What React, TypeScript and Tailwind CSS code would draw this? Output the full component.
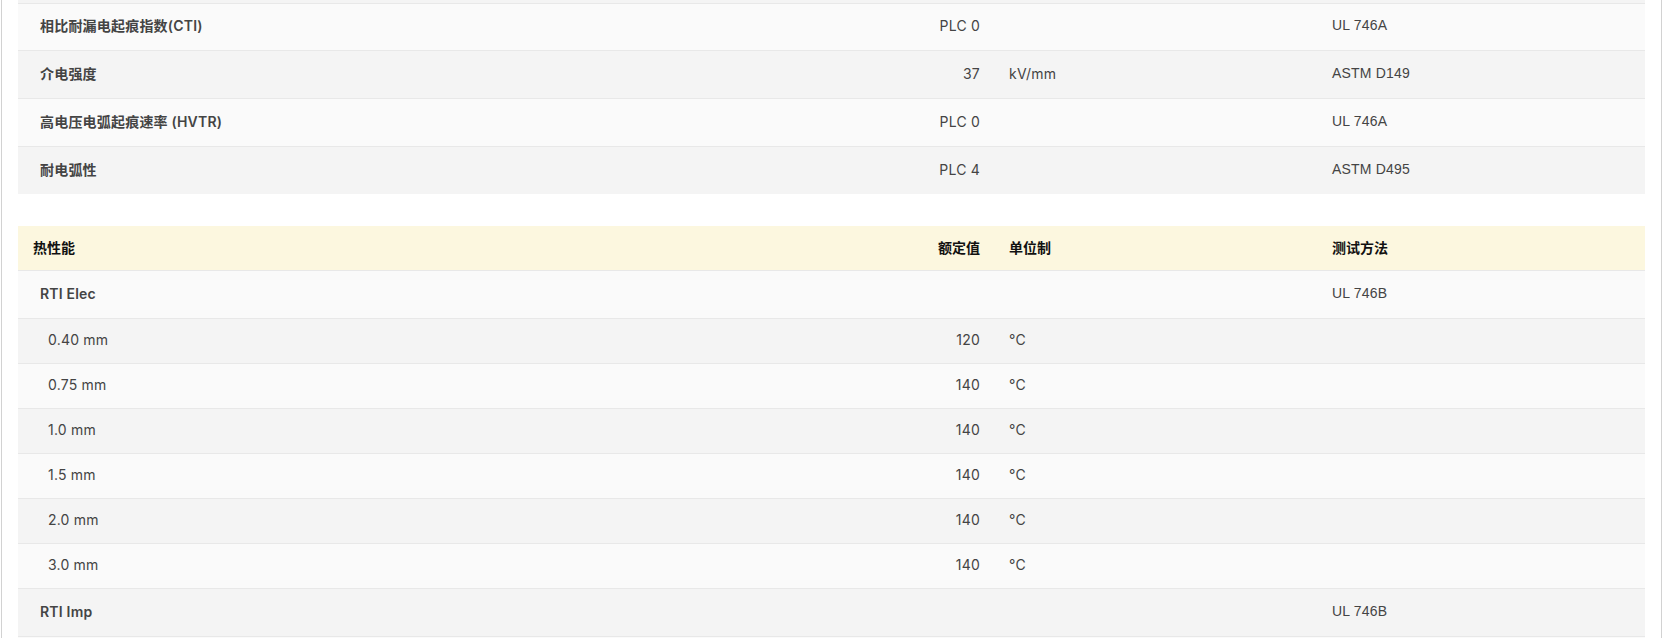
const font = {
  fontFamily: 'Inter, "Noto Sans CJK SC", sans-serif',
};

type Row = {
  label: string;
  value?: string;
  unit?: string;
  method?: string;
  sub?: boolean;
};

const electrical: Row[] = [
  { label: '相比耐漏电起痕指数(CTI)', value: 'PLC 0', method: 'UL 746A' },
  { label: '介电强度', value: '37', unit: 'kV/mm', method: 'ASTM D149' },
  { label: '高电压电弧起痕速率 (HVTR)', value: 'PLC 0', method: 'UL 746A' },
  { label: '耐电弧性', value: 'PLC 4', method: 'ASTM D495' },
];

const thermal: Row[] = [
  { label: 'RTI Elec', method: 'UL 746B' },
  { label: '0.40 mm', value: '120', unit: '°C', sub: true },
  { label: '0.75 mm', value: '140', unit: '°C', sub: true },
  { label: '1.0 mm', value: '140', unit: '°C', sub: true },
  { label: '1.5 mm', value: '140', unit: '°C', sub: true },
  { label: '2.0 mm', value: '140', unit: '°C', sub: true },
  { label: '3.0 mm', value: '140', unit: '°C', sub: true },
  { label: 'RTI Imp', method: 'UL 746B' },
];

const cols = 'grid grid-cols-[842px_135px_322px_328px] items-center';

function DataRow({ row, dark, first }: { row: Row; dark: boolean; first?: boolean }) {
  const height = row.sub ? 'h-[45px]' : first ? 'h-[47px]' : 'h-[48px]';
  return (
    <div
      className={`${cols} ${height} border-t border-[#e8e8e8] pb-[3px] text-[14px] tracking-[0.2px] text-[#444] ${
        dark ? 'bg-[#f4f4f4]' : 'bg-[#fafafa]'
      }`}
    >
      <div className={row.sub ? 'pl-[30px] font-normal' : 'pl-[22px] font-semibold'}>{row.label}</div>
      <div className="pr-[15px] text-right">{row.value}</div>
      <div className="pl-[14px]">{row.unit}</div>
      <div className="pl-[15px]" style={{ fontFamily: '"Liberation Sans", Arial, sans-serif' }}>
        {row.method}
      </div>
    </div>
  );
}

export default function App() {
  return (
    <div className="h-[638px] w-[1663px] overflow-hidden bg-white" style={font}>
      <div className="ml-[1px] h-[638px] w-[1661px] border-x border-[#d2d2d2] pl-[16px]">
        <div className="w-[1627px]">
          <div className="h-[3px] bg-[#f4f4f4]" />
          {electrical.map((r, i) => (
            <DataRow key={r.label} row={r} dark={i % 2 === 1} first={i === 0} />
          ))}
        </div>

        <div className="mt-[32px] w-[1627px]">
          <div className={`${cols} h-[44px] bg-[#fcf7df] pb-[2px] text-[14px] font-bold text-[#111]`}>
            <div className="pl-[15px]">热性能</div>
            <div className="pr-[15px] text-right">额定值</div>
            <div className="pl-[14px]">单位制</div>
            <div className="pl-[15px]">测试方法</div>
          </div>
          {thermal.map((r, i) => (
            <DataRow key={r.label + i} row={r} dark={i % 2 === 1} />
          ))}
          <div className="h-[20px] border-t border-[#e8e8e8] bg-[#fafafa]" />
        </div>
      </div>
    </div>
  );
}
